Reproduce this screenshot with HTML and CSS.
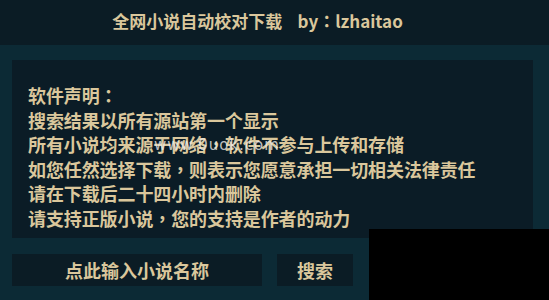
FILE: index.html
```html
<!DOCTYPE html>
<html lang="zh-CN">
<head>
<meta charset="utf-8">
<title>全网小说自动校对下载</title>
<link rel="stylesheet" href="styles.css">
</head>
<body>
<header class="titlebar">
  <span class="title">全网小说自动校对下载&nbsp;&nbsp;&nbsp;&nbsp;by<span class="p" lang="zh-Hant">：</span>lzhaitao</span>
</header>
<main class="main">
  <section class="notice">
    <p>软件声明<span class="p" lang="zh-Hant">：</span></p>
    <p>搜索结果以所有源站第一个显示</p>
    <p>所有小说均来源于网络<span class="p" lang="zh-Hant">，</span>软件不参与上传和存储</p>
    <p>如您任然选择下载<span class="p" lang="zh-Hant">，</span>则表示您愿意承担一切相关法律责任</p>
    <p>请在下载后二十四小时内删除</p>
    <p>请支持正版小说<span class="p" lang="zh-Hant">，</span>您的支持是作者的动力</p>
    <span class="watermark">www.0uok.com</span>
  </section>
  <div class="controls">
    <div class="input">点此输入小说名称</div>
    <div class="btn">搜索</div>
  </div>
</main>
<div class="blackout"></div>
</body>
</html>
```
FILE: styles.css
```css
html, body {
  margin: 0;
  padding: 0;
}
body {
  width: 549px;
  height: 300px;
  background: #0c2a35;
  font-family: "Microsoft YaHei", "Noto Sans CJK SC", "Noto Sans", sans-serif;
  font-weight: 700;
  color: #dac79c;
  overflow: hidden;
  position: relative;
}
.p {
  font-family: "Noto Sans CJK TC", "Noto Sans CJK SC", sans-serif;
}
.titlebar {
  height: 45px;
  background: #0b1c25;
  display: flex;
  align-items: center;
  justify-content: center;
  padding-right: 34px;
}
.title {
  font-size: 17px;
  line-height: 20px;
  margin-top: -4px;
  white-space: nowrap;
}
.main {
  padding: 15px 16px 0 12px;
}
.notice {
  position: relative;
  height: 178px;
  box-sizing: border-box;
  background: #0b1c26;
  padding: 23px 0 0 16px;
}
.notice p {
  margin: 0;
  font-size: 18px;
  line-height: 24.6px;
  white-space: nowrap;
  letter-spacing: -0.1px;
}
.watermark {
  position: absolute;
  left: 142px;
  top: 76px;
  font-family: "DejaVu Sans", sans-serif;
  font-size: 15px;
  font-weight: 400;
  color: rgba(235, 235, 235, 0.8);
  letter-spacing: 1px;
}
.controls {
  display: flex;
  gap: 15px;
  margin-top: 16px;
}
.input, .btn {
  height: 32px;
  background: #0b1c25;
  display: flex;
  align-items: center;
  justify-content: center;
  font-size: 18px;
}
.input {
  width: 250px;
}
.btn {
  width: 76px;
}
.blackout {
  position: absolute;
  left: 369px;
  top: 229px;
  width: 180px;
  height: 71px;
  background: #000;
}
```
